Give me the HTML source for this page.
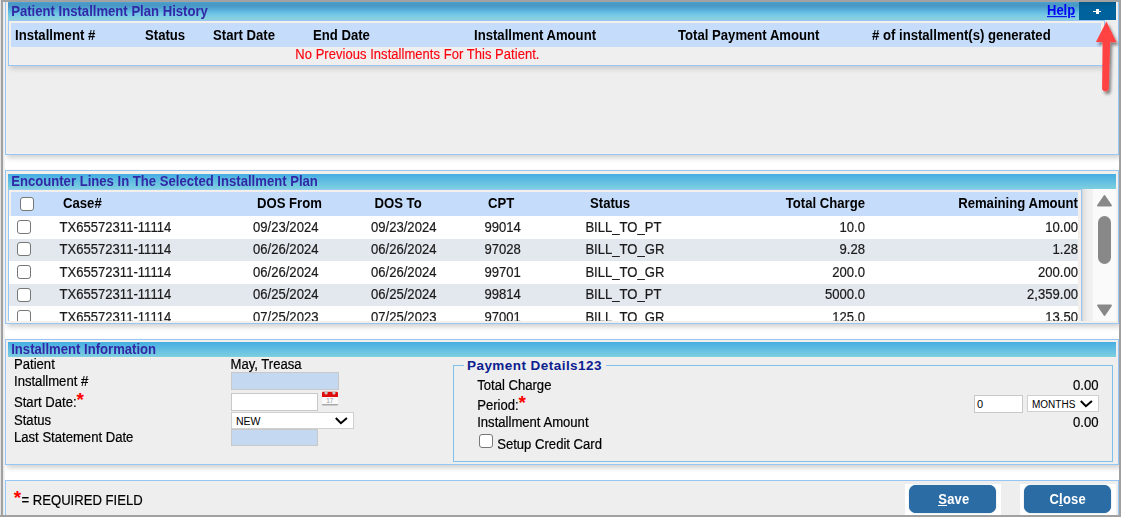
<!DOCTYPE html>
<html><head><meta charset="utf-8">
<style>
*{box-sizing:border-box;margin:0;padding:0}
html,body{width:1121px;height:517px;overflow:hidden;background:#fff;font-family:"Liberation Sans",sans-serif;font-size:13px;color:#000}
.a{position:absolute}
.t{position:absolute;white-space:nowrap;line-height:15px}
.b{font-weight:bold}
.panel{position:absolute;border:1px solid #96c6f6;background:#f3f0eb;box-shadow:2px 3px 5px rgba(0,0,0,0.18)}
.inner{position:absolute;background:#eeeeee}
.hdr{position:absolute;background:linear-gradient(#46aee2,#7ecfe0)}
.title{position:absolute;white-space:nowrap;line-height:15px;font-weight:bold;color:#3228a6;font-size:13.12px;transform:scaleY(1.07);transform-origin:0 12px}
.cb{position:absolute;width:14px;height:14px;border:1.5px solid #777;border-radius:3px;background:#fff}
.gh{position:absolute;white-space:nowrap;line-height:15px;font-weight:bold;color:#000;font-size:13.14px;transform:scaleY(1.1);transform-origin:0 12px}
.gd{position:absolute;white-space:nowrap;line-height:15px;color:#1a1a1a;font-size:13.08px;transform:scaleY(1.07);transform-origin:0 12px;-webkit-text-stroke:0.2px currentColor}
.r{text-align:right}
.sy{font-size:13.1px;transform:scaleY(1.07);transform-origin:0 12px;-webkit-text-stroke:0.2px currentColor}
.ast{position:absolute;white-space:nowrap;line-height:15px;font-weight:bold;color:#f00;font-size:19px}
</style></head><body>
<div class="panel" style="left:5px;top:-3px;width:1114px;height:158px"></div>
<div class="inner" style="left:8px;top:20px;width:1110px;height:133px"></div>
<div class="a" style="left:8px;top:2px;width:1071px;height:18px;background:linear-gradient(#52a8d8 0px,#4a98c6 1px,#4a98c6 4px,#5cb6de 9px,#72c6e6 12px,#8ed4de 18px)"></div>
<div class="title" style="left:11.2px;top:4px">Patient Installment Plan History</div>
<div class="t b" style="left:1047px;top:3px;color:#0000f0;text-decoration:underline;transform:scaleY(1.1);transform-origin:0 12px">Help</div>
<div class="a" style="left:1079px;top:2px;width:37px;height:18px;background:linear-gradient(#005888,#00629c 5px)"></div>
<div class="a" style="left:1093.2px;top:10.7px;width:8px;height:1.5px;background:#fff"></div>
<div class="a" style="left:1096px;top:9px;width:2.8px;height:5px;background:#fff"></div>
<div class="a" style="left:8px;top:20px;width:1097px;height:46px;border:1px solid #96c6f6;background:#f3f0eb;box-shadow:2px 3px 5px rgba(0,0,0,0.15)"></div>
<div class="a" style="left:11px;top:23px;width:1090px;height:24px;background:#c5dcfb"></div>
<div class="a" style="left:10px;top:47px;width:1093px;height:17px;background:#efefef"></div>
<div class="gh" style="left:15px;top:28px">Installment #</div>
<div class="gh" style="left:145px;top:28px">Status</div>
<div class="gh" style="left:213px;top:28px">Start Date</div>
<div class="gh" style="left:313px;top:28px">End Date</div>
<div class="gh" style="left:474px;top:28px">Installment Amount</div>
<div class="gh" style="left:678px;top:28px">Total Payment Amount</div>
<div class="gh" style="left:872px;top:28px"># of installment(s) generated</div>
<div class="t" style="left:295.3px;top:47px;color:#fc0510;letter-spacing:0.04px;-webkit-text-stroke:0.15px currentColor;transform:scaleY(1.07);transform-origin:0 12px">No Previous Installments For This Patient.</div>
<div class="panel" style="left:5px;top:170px;width:1114px;height:154px"></div>
<div class="hdr" style="left:8px;top:174px;width:1108px;height:15px"></div>
<div class="title" style="left:11.2px;top:174px">Encounter Lines In The Selected Installment Plan</div>
<div class="a" style="left:8px;top:189px;width:1074px;height:132px;border:1px solid #96c6f6;border-bottom:none;background:#f3f0eb;overflow:hidden"><div class="a" style="left:2px;top:2px;width:1067px;height:24px;background:#c5dcfb"></div><div class="cb" style="left:11.2px;top:6.8px"></div><div class="gh" style="left:54.0px;top:5.9px">Case#</div><div class="gh" style="left:248.0px;top:5.9px">DOS From</div><div class="gh" style="left:365.5px;top:5.9px">DOS To</div><div class="gh" style="left:479.0px;top:5.9px">CPT</div><div class="gh" style="left:581.0px;top:5.9px">Status</div><div class="gh r" style="left:656.0px;width:200px;top:5.9px">Total Charge</div><div class="gh r" style="left:869.0px;width:200px;top:5.9px">Remaining Amount</div><div class="a" style="left:0;top:26.0px;width:1069px;height:23.0px;background:#ffffff"></div><div class="cb" style="left:7.8px;top:29.8px"></div><div class="gd" style="left:50.5px;top:29.6px">TX65572311-11114</div><div class="gd" style="left:244.0px;top:29.6px">09/23/2024</div><div class="gd" style="left:362.0px;top:29.6px">09/23/2024</div><div class="gd" style="left:475.4px;top:29.6px">99014</div><div class="gd" style="left:576.4px;top:29.6px">BILL_TO_PT</div><div class="gd r" style="left:656.0px;width:200px;top:29.6px">10.0</div><div class="gd r" style="left:869.0px;width:200px;top:29.6px">10.00</div><div class="a" style="left:0;top:48.6px;width:1069px;height:23.0px;background:#e3e7ee"></div><div class="cb" style="left:7.8px;top:52.4px"></div><div class="gd" style="left:50.5px;top:52.2px">TX65572311-11114</div><div class="gd" style="left:244.0px;top:52.2px">06/26/2024</div><div class="gd" style="left:362.0px;top:52.2px">06/26/2024</div><div class="gd" style="left:475.4px;top:52.2px">97028</div><div class="gd" style="left:576.4px;top:52.2px">BILL_TO_GR</div><div class="gd r" style="left:656.0px;width:200px;top:52.2px">9.28</div><div class="gd r" style="left:869.0px;width:200px;top:52.2px">1.28</div><div class="a" style="left:0;top:71.2px;width:1069px;height:23.0px;background:#ffffff"></div><div class="cb" style="left:7.8px;top:75.0px"></div><div class="gd" style="left:50.5px;top:74.8px">TX65572311-11114</div><div class="gd" style="left:244.0px;top:74.8px">06/26/2024</div><div class="gd" style="left:362.0px;top:74.8px">06/26/2024</div><div class="gd" style="left:475.4px;top:74.8px">99701</div><div class="gd" style="left:576.4px;top:74.8px">BILL_TO_GR</div><div class="gd r" style="left:656.0px;width:200px;top:74.8px">200.0</div><div class="gd r" style="left:869.0px;width:200px;top:74.8px">200.00</div><div class="a" style="left:0;top:93.8px;width:1069px;height:23.0px;background:#e3e7ee"></div><div class="cb" style="left:7.8px;top:97.6px"></div><div class="gd" style="left:50.5px;top:97.4px">TX65572311-11114</div><div class="gd" style="left:244.0px;top:97.4px">06/25/2024</div><div class="gd" style="left:362.0px;top:97.4px">06/25/2024</div><div class="gd" style="left:475.4px;top:97.4px">99814</div><div class="gd" style="left:576.4px;top:97.4px">BILL_TO_PT</div><div class="gd r" style="left:656.0px;width:200px;top:97.4px">5000.0</div><div class="gd r" style="left:869.0px;width:200px;top:97.4px">2,359.00</div><div class="a" style="left:0;top:116.4px;width:1069px;height:23.0px;background:#ffffff"></div><div class="cb" style="left:7.8px;top:120.2px"></div><div class="gd" style="left:50.5px;top:120.0px">TX65572311-11114</div><div class="gd" style="left:244.0px;top:120.0px">07/25/2023</div><div class="gd" style="left:362.0px;top:120.0px">07/25/2023</div><div class="gd" style="left:475.4px;top:120.0px">97001</div><div class="gd" style="left:576.4px;top:120.0px">BILL_TO_GR</div><div class="gd r" style="left:656.0px;width:200px;top:120.0px">125.0</div><div class="gd r" style="left:869.0px;width:200px;top:120.0px">13.50</div></div>
<div class="a" style="left:1082px;top:189px;width:35px;height:132px;background:linear-gradient(90deg,#d2d2d2 0px,#e4e4e4 2px,#eeeeee 6px,#f2f2f2 11px,#fafafa 11px,#fafafa 34px,#ececec 35px)"></div>
<svg class="a" style="left:1096px;top:194px" width="17" height="14"><path d="M8.5 2 L15 11.5 L2 11.5 Z" fill="#888" stroke="#888" stroke-width="1.8" stroke-linejoin="round"/></svg>
<div class="a" style="left:1098px;top:216px;width:13px;height:48px;border-radius:6.5px;background:#888"></div>
<svg class="a" style="left:1096px;top:303px" width="17" height="14"><path d="M8.5 12 L15 2.5 L2 2.5 Z" fill="#888" stroke="#888" stroke-width="1.8" stroke-linejoin="round"/></svg>
<div class="panel" style="left:5px;top:339px;width:1114px;height:126px"></div>
<div class="inner" style="left:7px;top:342px;width:1111px;height:122px"></div>
<div class="a" style="left:8px;top:357px;width:1108px;height:1px;background:#f3f0eb"></div>
<div class="hdr" style="left:8px;top:342px;width:1108px;height:15px"></div>
<div class="title" style="left:11.2px;top:342px">Installment Information</div>
<div class="t sy" style="left:14px;top:357.0px">Patient</div>
<div class="t sy" style="left:14px;top:373.6px">Installment #</div>
<div class="t sy" style="left:14px;top:394.9px">Start Date:</div>
<div class="t sy" style="left:14px;top:412.6px">Status</div>
<div class="t sy" style="left:14px;top:429.5px">Last Statement Date</div>
<div class="ast" style="left:76.6px;top:391.6px">*</div>
<div class="t sy" style="left:230.5px;top:356.8px">May, Treasa</div>
<div class="a" style="left:231px;top:372px;width:108px;height:18px;border:1px solid #c8c8c8;background:#c4d8f2"></div>
<div class="a" style="left:231px;top:393px;width:87px;height:18px;border:1px solid #c8c8c8;background:#fff"></div>
<div class="a" style="left:231px;top:412px;width:123px;height:17px;border:1px solid #d0d0d0;background:#fff"></div>
<div class="t" style="left:236px;top:415px;font-size:10.5px;line-height:12px">NEW</div>
<svg class="a" style="left:334px;top:416px" width="14" height="9"><path d="M1.8 2 L6.9 7.2 L12.9 2" fill="none" stroke="#000" stroke-width="2"/></svg>
<div class="a" style="left:231px;top:429px;width:87px;height:17px;border:1px solid #c8c8c8;background:#c4d8f2"></div>
<svg class="a" style="left:322px;top:390px" width="16" height="16"><rect x="0" y="13.2" width="16" height="2.4" rx="0.8" fill="#a8a8a8"/><rect x="0" y="6" width="16" height="8" fill="#fbfbfb"/><path d="M0 3.2 Q0 1.8 1.4 1.8 L14.6 1.8 Q16 1.8 16 3.2 L16 7 L0 7 Z" fill="#e00c0c"/><rect x="2.6" y="0.8" width="3" height="3.6" rx="1.2" fill="#c9c9c9"/><rect x="10.4" y="0.8" width="3" height="3.6" rx="1.2" fill="#c9c9c9"/><text x="4.2" y="12.6" font-size="6.5" fill="#9a9a9a" font-family="Liberation Sans">17</text></svg>
<div class="a" style="left:453px;top:365px;width:660px;height:97px;border:1px solid #7ec0ea"></div>
<div class="a" style="left:464px;top:358px;width:142px;height:12px;background:#eeeeee"></div>
<div class="t b" style="left:467px;top:357.7px;color:#0c2090;letter-spacing:0.45px;font-size:13.5px">Payment Details123</div>
<div class="t sy" style="left:477.2px;top:378.1px">Total Charge</div>
<div class="t sy" style="left:477.2px;top:397.7px">Period:</div>
<div class="t sy" style="left:477.2px;top:414.8px">Installment Amount</div>
<div class="ast" style="left:518.4px;top:394.8px">*</div>
<div class="cb" style="left:478.8px;top:434.4px;width:14px;height:13.5px"></div>
<div class="t sy" style="left:497.2px;top:437px">Setup Credit Card</div>
<div class="t r sy" style="left:998px;width:100.5px;top:377.5px">0.00</div>
<div class="t r sy" style="left:998px;width:100.5px;top:414.7px">0.00</div>
<div class="a" style="left:974px;top:395px;width:49px;height:18px;border:1px solid #c8c8c8;background:#fff"></div>
<div class="t" style="left:977px;top:398px;font-size:11px;line-height:13px">0</div>
<div class="a" style="left:1027px;top:395px;width:72px;height:17px;border:1px solid #d0d0d0;background:#fff"></div>
<div class="t" style="left:1032px;top:398.5px;font-size:10px;line-height:12px">MONTHS</div>
<svg class="a" style="left:1079px;top:399px" width="14" height="9"><path d="M1.8 2 L6.9 7.2 L12.9 2" fill="none" stroke="#000" stroke-width="2"/></svg>
<div class="panel" style="left:5px;top:480px;width:1114px;height:40px;box-shadow:none"></div>
<div class="inner" style="left:6px;top:481px;width:1112px;height:34px"></div>
<div class="ast" style="left:13.8px;top:489.8px">*</div>
<div class="t sy" style="left:21.5px;top:493px">= REQUIRED FIELD</div>
<div class="a" style="left:905px;top:484px;width:96px;height:31px;background:#fff"></div>
<div class="a" style="left:1020px;top:484px;width:96px;height:31px;background:#fff"></div>
<div class="a" style="left:909.2px;top:485.4px;width:87px;height:27.2px;border-radius:7px;background:#2b6ca5;box-shadow:0 0 0.8px #2a6a90"></div>
<div class="a" style="left:1024.3px;top:485.4px;width:87.2px;height:27.2px;border-radius:7px;background:#2b6ca5;box-shadow:0 0 0.8px #2a6a90"></div>
<div class="t b" style="left:938.3px;top:492px;color:#fff;letter-spacing:0.2px;transform:scaleY(1.08);transform-origin:0 12px">Save</div>
<div class="a" style="left:938px;top:505px;width:9px;height:1px;background:#fff"></div>
<div class="t b" style="left:1049.4px;top:492px;color:#fff;letter-spacing:0.25px;transform:scaleY(1.08);transform-origin:0 12px">Close</div>
<div class="a" style="left:1059px;top:505px;width:4px;height:1px;background:#fff"></div>
<svg class="a" style="left:1085px;top:15px;overflow:visible" width="36" height="90"><defs><filter id="sh" x="-50%" y="-20%" width="200%" height="150%"><feGaussianBlur in="SourceAlpha" stdDeviation="1.6"/><feOffset dx="1.5" dy="2.5"/><feComponentTransfer><feFuncA type="linear" slope="0.45"/></feComponentTransfer><feMerge><feMergeNode/><feMergeNode in="SourceGraphic"/></feMerge></filter></defs><g filter="url(#sh)" fill="#ff4343"><path d="M21.4 6.6 L31.6 27.2 L10.9 26.9 Z"/><path d="M17.6 26 L25.2 26 L23.8 73.5 A3.4 3.4 0 0 1 17.1 73.5 Z"/></g></svg>
<div class="a" style="left:0;top:0;width:1121px;height:2px;background:#a2a2a2"></div>
<div class="a" style="left:0;top:0;width:1px;height:517px;background:#e4e4e4"></div>
<div class="a" style="left:1px;top:0;width:2px;height:517px;background:#a0a0a0"></div>
<div class="a" style="left:3px;top:2px;width:2px;height:513px;background:linear-gradient(90deg,#e6e6e6,#f4f4f4)"></div>
<div class="a" style="left:1119px;top:0;width:2px;height:517px;background:#a0a0a0"></div>
<div class="a" style="left:0;top:515px;width:1121px;height:2px;background:#a0a0a0"></div>
</body></html>
